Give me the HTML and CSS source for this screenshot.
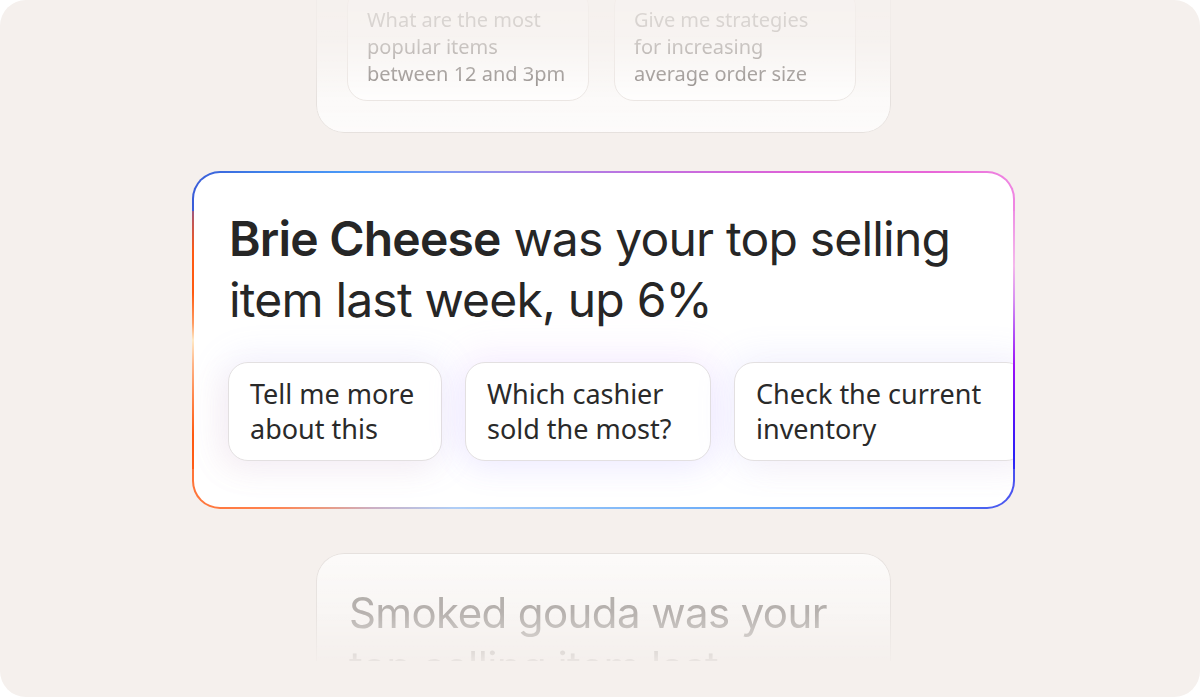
FILE: index.html
```html
<!DOCTYPE html>
<html lang="en">
<head>
<meta charset="utf-8">
<title>Insights</title>
<link rel="stylesheet" href="styles.css">
</head>
<body>
<div class="frame">
  <div class="column">
    <div class="ghost-top">
      <div class="ghost-chip">What are the most popular items between 12 and 3pm</div>
      <div class="ghost-chip">Give me strategies for increasing average order size</div>
    </div>

    <div class="glow">
      <div class="card">
        <h1 class="headline"><b>Brie Cheese</b> was your top selling item last week, up 6%</h1>
        <div class="chips">
          <div class="chip chip-a">Tell me more about this</div>
          <div class="chip chip-b">Which cashier sold the most?</div>
          <div class="chip chip-c">Check the current inventory</div>
        </div>
      </div>
    </div>

    <div class="ghost-bottom">
      <p class="ghost-headline">Smoked gouda was your top selling item last week</p>
    </div>
  </div>
</div>
</body>
</html>
```

FILE: styles.css
```css
* { box-sizing: border-box; }

html, body {
  margin: 0;
  padding: 0;
  background: #ffffff;
}

.frame {
  width: 1200px;
  height: 697px;
  border-radius: 26px;
  background: #f5f0ed;
  overflow: hidden;
}

.column {
  display: flex;
  flex-direction: column;
  align-items: center;
  padding-left: 7px;
}

/* faded card above */
.ghost-top {
  width: 575px;
  margin-top: -44px;
  padding: 30px 30px 31px;
  display: flex;
  gap: 25px;
  border: 1.5px solid #e6e1de;
  border-radius: 28px;
  background: linear-gradient(to bottom, rgba(255,255,255,0.2), rgba(255,255,255,0.75));
  -webkit-mask-image: linear-gradient(to bottom, rgba(0,0,0,0.12) 0%, rgba(0,0,0,0.3) 45%, #000 80%);
  mask-image: linear-gradient(to bottom, rgba(0,0,0,0.12) 0%, rgba(0,0,0,0.3) 45%, #000 80%);
}

.ghost-chip {
  width: 242px;
  flex: none;
  padding: 18px 20px 13px 19px;
  border: 1.5px solid #ebe6e3;
  border-radius: 20px;
  background: rgba(255,255,255,0.6);
  font-family: "Noto Sans", sans-serif;
  font-size: 20px;
  line-height: 27px;
  color: #8e8986;
}

/* main card */
.glow {
  width: 823px;
  height: 338px;
  margin-top: 38px;
  padding: 2px;
  border-radius: 28px;
  background:
    linear-gradient(90deg, #3a5cd8 0%, #3f7fe8 8%, #4a9af8 19%, #7c9af2 30%, #a08ae8 40%, #c070e0 55%, #dc62d8 72%, #e866d8 90%, #ef86e2 100%) top / 100% 40px no-repeat,
    linear-gradient(90deg, #ff7438 0%, #ff8450 10%, #eb9a80 16%, #ccb0c4 22%, #b0cef6 32%, #92c2f8 45%, #72b0f8 62%, #5a9af8 80%, #4a70f0 93%, #4a52f0 100%) bottom / 100% 40px no-repeat,
    linear-gradient(180deg, #3b5bdb 0%, #6a5cb8 8%, #c05658 15%, #ff5a12 24%, #ff5a10 36%, #ff9a60 45%, #ffe9c6 50%, #ffb588 57%, #ff8a50 66%, #ff5a10 78%, #ff5c18 90%, #ff7a40 100%) left / 50% 100% no-repeat,
    linear-gradient(180deg, #e46ed8 0%, #ee90e4 12%, #f4b8ec 28%, #d890f2 38%, #b050f6 48%, #9a10f8 58%, #5a10f8 72%, #2a20f8 84%, #3a3cf4 94%, #4a5cf0 100%) right / 50% 100% no-repeat;
}

.card {
  height: 100%;
  border-radius: 26px;
  background: #ffffff;
  overflow: hidden;
  padding: 35px 0 0 35px;
}

.headline {
  margin: 0;
  max-width: 760px;
  font-family: "Inter", sans-serif;
  font-weight: 400;
  font-size: 48px;
  line-height: 61px;
  letter-spacing: -0.8px;
  color: #262626;
}

.headline b {
  font-weight: 600;
}

.chips {
  display: flex;
  gap: 23px;
  margin-top: 32px;
  margin-left: -1px;
}

.chip {
  flex: none;
  height: 99px;
  padding: 13px 18px 0 21px;
  border: 1.5px solid #e3e0e1;
  border-radius: 20px;
  background: #ffffff;
  font-family: "Noto Sans", sans-serif;
  font-size: 27px;
  line-height: 35px;
  color: #2a2a2a;
}

.chip-a {
  width: 214px;
  box-shadow: 0 0 34px 6px rgba(150, 150, 255, 0.13), -10px 10px 30px rgba(255, 170, 120, 0.08);
}

.chip-b {
  width: 246px;
  box-shadow: 0 -6px 34px 6px rgba(210, 150, 255, 0.12), 0 10px 30px rgba(130, 150, 255, 0.1);
}

.chip-c {
  width: 292px;
  box-shadow: 0 0 34px 6px rgba(140, 140, 255, 0.12), 20px 10px 30px rgba(255, 200, 160, 0.08);
}

/* faded card below */
.ghost-bottom {
  width: 575px;
  height: 108px;
  margin-top: 44px;
  padding: 32px 0 0 32px;
  border: 1.5px solid #e6e1de;
  border-bottom: none;
  border-radius: 28px 28px 0 0;
  background: linear-gradient(to bottom, rgba(255,255,255,0.7), rgba(255,255,255,0.25));
  overflow: hidden;
  -webkit-mask-image: linear-gradient(to bottom, #000 0%, rgba(0,0,0,0.85) 55%, rgba(0,0,0,0.15) 100%);
  mask-image: linear-gradient(to bottom, #000 0%, rgba(0,0,0,0.85) 55%, rgba(0,0,0,0.15) 100%);
}

.ghost-headline {
  margin: 0;
  max-width: 481px;
  font-family: "Inter", sans-serif;
  font-size: 42px;
  line-height: 54px;
  letter-spacing: -0.6px;
  color: #aca7a4;
}
```
